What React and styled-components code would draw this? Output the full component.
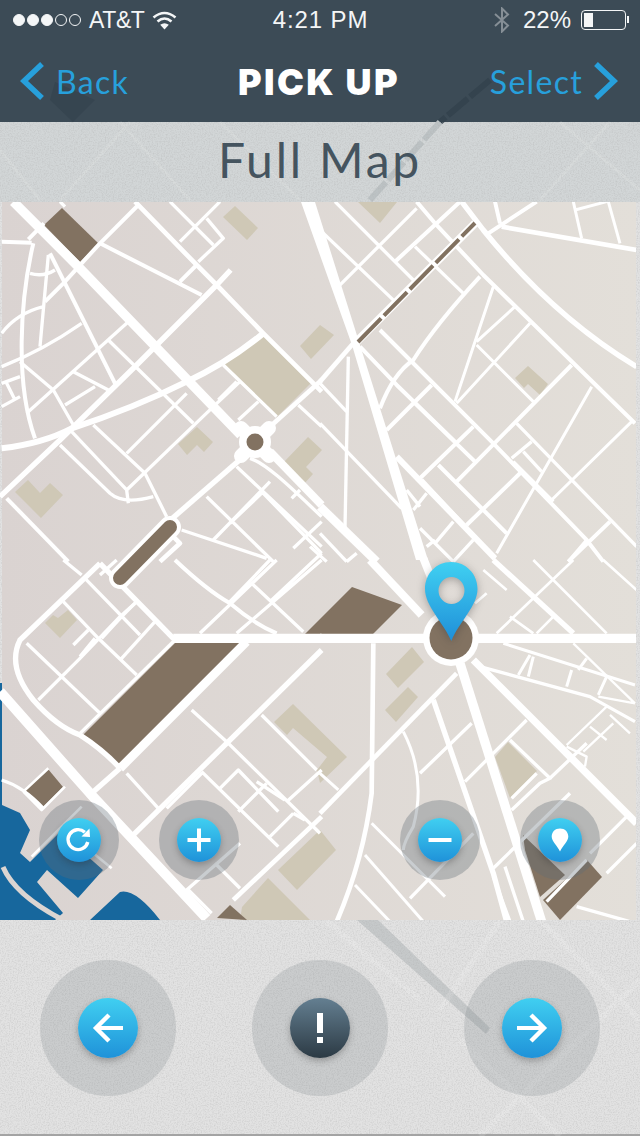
import React from 'react';
import styled, { createGlobalStyle } from 'styled-components';

const GlobalStyle = createGlobalStyle`
  html, body {
    margin: 0;
    padding: 0;
    background: #d6d8d8;
  }
  * { box-sizing: border-box; }
`;

const Page = styled.div`
  position: relative;
  width: 640px;
  height: 1136px;
  overflow: hidden;
  display: flex;
  flex-direction: column;
  font-family: "Liberation Sans", Arial, sans-serif;
  background: #e2e2e2;
`;
const Backdrop = styled.svg`
  position: absolute;
  inset: 0;
  z-index: 1;
  pointer-events: none;
`;
const Header = styled.header`
  height: 122px;
  background: #3c4b56;
  display: flex;
  flex-direction: column;
`;
const StatusBar = styled.div`
  position: relative;
  z-index: 2;
  height: 40px;
  padding: 0 12px 0 13px;
  display: grid;
  grid-template-columns: 1fr auto 1fr;
  align-items: center;
  color: #f4f6f7;
`;
const StatusGroup = styled.div`
  display: flex;
  align-items: center;
  gap: ${p => p.$gap || 8}px;
  justify-content: ${p => (p.$end ? 'flex-end' : 'flex-start')};
`;
const Dots = styled.div`
  display: flex;
  gap: 2px;
`;
const Dot = styled.span`
  width: 12px;
  height: 12px;
  border-radius: 50%;
  border: 1px solid #f4f6f7;
  background: ${p => (p.$on ? '#f4f6f7' : 'transparent')};
`;
const StatusText = styled.span`
  font-size: ${p => p.$size || 24}px;
  letter-spacing: ${p => p.$track || 0}px;
  line-height: 1;
`;
const Battery = styled.div`
  position: relative;
  width: 45px;
  height: 20px;
  border: 1.5px solid #f4f6f7;
  border-radius: 4px;
  padding: 2px;
  margin-right: 2px;
  &::before {
    content: '';
    display: block;
    width: 9px;
    height: 100%;
    background: #f4f6f7;
  }
  &::after {
    content: '';
    position: absolute;
    right: -4px;
    top: 5px;
    width: 2px;
    height: 7px;
    background: #f4f6f7;
  }
`;
const NavBar = styled.nav`
  position: relative;
  z-index: 2;
  flex: 1;
  padding: 0 22px 0 20px;
  display: grid;
  grid-template-columns: 1fr auto 1fr;
  align-items: center;
`;
const NavLink = styled.a`
  display: flex;
  align-items: center;
  gap: ${p => p.$gap}px;
  justify-content: ${p => (p.$end ? 'flex-end' : 'flex-start')};
  color: #27a0dc;
  font-family: "Lato", sans-serif;
  font-weight: 400;
  font-size: 32px;
  letter-spacing: 1.3px;
`;
const NavTitle = styled.h1`
  margin: 2px 0 0;
  color: #fff;
  font-family: "Inter", "Lato", sans-serif;
  font-weight: 900;
  font-size: 36px;
  letter-spacing: 2.4px;
  line-height: 1;
`;
const TitleBand = styled.div`
  position: relative;
  height: 80px;
  padding-bottom: 4px;
  background: #d2d6d7;
  display: flex;
  align-items: center;
  justify-content: center;
`;
const Title = styled.h2`
  position: relative;
  z-index: 2;
  margin: 0;
  color: #45545f;
  font-family: "Lato", sans-serif;
  font-weight: 400;
  font-size: 48px;
  letter-spacing: 2.8px;
  line-height: 1;
`;
const MapArea = styled.section`
  position: relative;
  z-index: 2;
  width: 636px;
  height: 718px;
  overflow: hidden;
`;
const MapDrawing = styled.svg`
  display: block;
`;
const Pin = styled.svg`
  position: absolute;
  left: 421px;
  top: 358px;
  filter: drop-shadow(0 2px 4px rgba(50, 50, 50, 0.35));
`;
const MapControls = styled.div`
  position: absolute;
  left: 39px;
  right: 36px;
  bottom: 40px;
  display: flex;
  justify-content: space-between;
`;
const ControlGroup = styled.div`
  display: flex;
  gap: 40px;
`;
const Halo = styled.div`
  width: ${p => p.$size}px;
  height: ${p => p.$size}px;
  border-radius: 50%;
  background: ${p => p.$tint || 'rgba(96, 108, 116, 0.34)'};
  display: flex;
  align-items: center;
  justify-content: center;
`;
const RoundButton = styled.button`
  width: ${p => p.$size}px;
  height: ${p => p.$size}px;
  padding: 0;
  border: none;
  border-radius: 50%;
  display: flex;
  align-items: center;
  justify-content: center;
  background: ${p =>
    p.$dark
      ? 'linear-gradient(#647f91, #2c3a44)'
      : 'linear-gradient(#40cff1, #1f92d9)'};
  box-shadow: 0 3px 6px rgba(40, 40, 40, 0.3);
`;
const BottomBar = styled.footer`
  position: relative;
  flex: 1;
  background: #e2e2e2;
  border-bottom: 2px solid #a3a3a3;
  padding: 40px 40px 0;
  display: flex;
  justify-content: space-between;
  align-items: flex-start;
`;
const BottomSlot = styled.div`
  position: relative;
  z-index: 2;
`;

const Chevron = ({ flip }) => (
  <svg width="25" height="38" viewBox="0 0 25 38">
    <polyline
      points={flip ? '3,2 21,19 3,36' : '22,2 4,19 22,36'}
      fill="none"
      stroke="#27a0dc"
      strokeWidth="5.5"
    />
  </svg>
);

const Wifi = () => (
  <svg width="25" height="19" viewBox="0 0 25 19" fill="none" stroke="#f4f6f7" strokeWidth="2.6">
    <path d="M1.5 6.5 Q12.5 -2.5 23.5 6.5" />
    <path d="M5.5 10.5 Q12.5 4.5 19.5 10.5" />
    <path d="M12.5 18.5 L8.2 13.8 Q12.5 10.6 16.8 13.8 Z" fill="#f4f6f7" stroke="none" />
  </svg>
);

const Bluetooth = () => (
  <svg width="20" height="26" viewBox="0 0 20 26" fill="none" stroke="#868f96" strokeWidth="2">
    <path d="M2 7 L15 18.5 L9 24.5 L9 1.5 L15 7.5 L2 19" />
  </svg>
);

const RefreshIcon = () => (
  <svg width="30" height="30" viewBox="0 0 30 30" fill="none">
    <path d="M23.8 17 A10 10 0 1 1 20.8 7.2" stroke="#fff" strokeWidth="3.4" />
    <path d="M17.5 11.5 L26 12 L25.5 3.5 Z" fill="#fff" />
  </svg>
);
const PlusIcon = () => (
  <svg width="24" height="24" viewBox="0 0 24 24" fill="#fff">
    <rect x="0.5" y="10" width="23" height="4" />
    <rect x="10" y="0.5" width="4" height="23" />
  </svg>
);
const MinusIcon = () => (
  <svg width="24" height="6" viewBox="0 0 24 6" fill="#fff">
    <rect x="0.5" y="1" width="23" height="4" />
  </svg>
);
const DropIcon = () => (
  <svg width="18" height="24" viewBox="0 0 18 24" fill="#fff">
    <path d="M9 0.5 C14 0.5 17.3 4 17.3 8.6 C17.3 13.5 12 17.5 9 23.5 C6 17.5 0.7 13.5 0.7 8.6 C0.7 4 4 0.5 9 0.5 Z" />
  </svg>
);
const ArrowIcon = ({ flip }) => (
  <svg width="32" height="32" viewBox="0 0 32 32" fill="none" stroke="#fff" strokeWidth="4.4"
    transform={flip ? 'scale(-1,1)' : undefined}>
    <path d="M1 16 H28" strokeWidth="4" />
    <polyline points="15,3 28,16 15,29" />
  </svg>
);
const BangIcon = () => (
  <svg width="8" height="30" viewBox="0 0 8 30" fill="#fff">
    <rect x="1" y="0" width="6" height="20" />
    <rect x="1" y="24" width="6" height="6" />
  </svg>
);

// streets are written in the coordinates of four 3x crops, one list per quadrant
const QUADS = [
  { at: [0, 200], roads: [
    [28, 'M40,5 L240,205 L722,705'],
    [18, 'M5,745 Q130,730 215,685 Q400,625 560,545 Q680,490 790,400'],
    [16, 'M0,890 L180,720 L410,495 L650,255 L692,210'],
    [14, 'M405,5 L590,195 L650,255 L790,400 L935,545 L965,575'],
    [14, 'M810,680 L965,540'],
    [24, 'M810,755 L965,915'],
    [16, 'M500,970 L730,770'],
    [12, 'M5,125 L95,128 M100,130 C60,300 45,550 105,715 M132,70 L85,118 M150,160 L345,550'],
    [10, 'M90,220 Q130,232 165,210 M5,400 Q50,340 130,320 M145,165 L120,440 M5,500 Q130,450 245,370'],
    [10, 'M60,485 L160,570 L220,675 M80,640 L385,365 M220,515 L325,570 M195,615 L285,560'],
    [10, 'M5,620 L60,590 M5,550 L60,530 M20,550 L45,600'],
    [12, 'M135,305 L190,250 L300,130 L415,15 M300,130 L605,285 M540,245 L590,195'],
    [10, 'M510,5 L640,135 M620,55 L670,115 L595,185 M540,125 L660,5 M180,5 L195,20'],
    [10, 'M325,420 L580,670 M280,675 L435,820 M215,695 L380,870 M180,735 L330,880 Q370,915 460,890'],
    [10, 'M380,760 L560,580 M380,870 L640,620 L720,545 M435,820 L500,950 M380,870 L385,910'],
    [10, 'M670,495 L830,650 M655,600 L710,545 M715,660 L775,605 M895,615 L965,680'],
    [10, 'M750,775 C800,790 880,870 965,950 M710,800 L965,1040 M620,890 L820,1085 M640,1020 L810,845'],
    [10, 'M545,990 L800,1075 M875,895 L900,870 M880,1045 L965,965 M790,880 L965,1060 M690,970 L790,875'],
    [12, 'M20,895 L205,1085'],
    [14, 'M480,1085 L540,1030 L520,1010'],
  ] },
  { at: [320, 200], roads: [
    [10, 'M45,5 L175,135 L280,240 M290,25 L55,260 M5,95 L225,305 M285,140 L430,280'],
    [12, 'M225,185 L420,5 M290,5 L345,70 L490,225 L945,670'],
    [16, 'M425,5 L490,90 Q700,350 950,500'],
    [12, 'M505,100 L650,5 M525,5 L540,70'],
    [14, 'M545,80 L950,150'],
    [9, 'M760,5 L785,115 M765,30 L860,5 M865,5 L900,130'],
    [24, 'M110,425 L465,70'],
    [12, 'M180,625 Q220,520 280,480 Q350,370 480,230'],
    [9, 'M520,260 L405,605 M470,425 L585,320 M470,435 L640,605 M410,610 L630,370'],
    [12, 'M180,390 L270,480 L520,730 L800,1020 L850,1085'],
    [12, 'M200,690 L335,555 M285,610 L465,785 M120,440 L230,555 L405,725 M300,835 L460,680 M410,845 L755,495'],
    [10, 'M590,670 L950,1040 M575,775 L635,725 M610,755 L665,815 M580,785 L700,905'],
    [9, 'M815,560 L530,1060 M695,900 L935,665'],
    [12, 'M305,840 L525,1075 M355,795 L560,1000 M440,975 L600,820 M745,1085 L870,965'],
    [10, 'M85,470 L75,985'],
    [10, 'M0,550 L80,635 M0,670 L245,925 M345,1030 L400,965 M280,930 L320,880 M260,870 L300,920'],
    [10, 'M300,985 L400,1085 M320,1040 L345,1020 M400,1085 L460,1020 M800,1020 L745,1085'],
    [18, 'M230,770 L525,1075'],
    [14, 'M0,545 L100,430'],
    [26, 'M0,920 L170,1085'],
    [10, 'M0,1000 L80,1085 M20,1085 L-30,1040 M110,1060 L80,1085'],
  ] },
  { at: [0, 560], roads: [
    [10, 'M190,0 L245,45 M350,0 L300,45'],
    [16, 'M300,10 L60,240 Q20,320 100,420 Q170,500 240,525 Q310,570 360,625'],
    [16, 'M300,10 L520,235 L530,235'],
    [10, 'M255,55 L420,225 M190,125 L295,235 L410,345 M410,125 L365,170 L305,235 M465,185 L365,295'],
    [10, 'M265,210 L220,255 M285,235 L240,290 M80,250 L300,460 M115,420 L240,295 L360,170 L410,125'],
    [10, 'M240,520 L525,240'],
    [26, 'M360,625 L740,245'],
    [10, 'M575,450 L680,545 L960,820 M785,465 L950,630'],
    [16, 'M400,825 L965,270'],
    [16, 'M275,700 L360,625'],
    [10, 'M380,640 L475,745 M500,745 L605,640 M605,635 L835,860 M660,685 L715,630 L835,755'],
    [10, 'M770,665 L855,720 M715,755 L800,670 M560,990 L720,850 M560,985 L635,1060'],
    [10, 'M810,830 L880,760 M720,985 L645,910 M860,725 L965,630 M880,760 L915,780'],
    [14, 'M700,1020 L965,770'],
    [30, 'M0,395 L270,700 L620,1075'],
    [12, 'M525,0 Q620,90 690,130 Q760,190 830,220'],
    [10, 'M600,220 L830,0 M710,220 L965,0 M690,125 L810,0 M755,70 L910,215 M810,125 L965,-20'],
    [8, 'M70,695 L125,750 L195,680 M145,625 L70,695'],
    [10, 'M5,660 Q70,680 130,745'],
    [8, 'M95,890 L245,740 M280,880 L335,925'],
    [28, 'M520,235 L965,235'],
  ] },
  { at: [320, 560], roads: [
    [28, 'M0,235 L950,235'],
    [24, 'M310,-5 L340,70'],
    [24, 'M150,0 L305,165'],
    [28, 'M420,310 L665,1085'],
    [22, 'M460,300 L950,790'],
    [14, 'M410,340 L0,760'],
    [16, 'M340,420 L520,940 L560,1085'],
    [9, 'M250,515 Q320,650 280,800 Q250,850 250,870'],
    [14, 'M160,250 L155,700 Q130,900 50,1085'],
    [16, 'M520,0 L760,220'],
    [8, 'M640,0 L860,220 M530,220 L760,0 M490,30 L560,90 M650,220 L700,170 M570,170 L640,220 M850,0 L950,90 M500,100 L465,130'],
    [9, 'M550,250 L945,375 M595,345 L630,285 M625,350 L640,290 M740,380 L755,330 M835,405 L860,350 M775,330 L800,295'],
    [10, 'M480,320 L810,410 L945,485'],
    [7, 'M760,250 L945,430 M835,410 L945,430 M740,555 L860,440 M790,575 L880,490 M740,560 L800,590 L795,620 M870,465 L930,520 M810,500 L860,540'],
    [9, 'M0,640 L55,690 M155,790 L375,1010 M135,885 L310,1085 M105,975 L210,1085'],
    [10, 'M270,1015 L460,820 M300,640 L455,490 M435,665 L620,480 M575,750 L660,670 L690,655 L570,540 M575,715 L650,640'],
    [10, 'M520,925 L750,700 M690,655 L800,550 M680,1025 L800,900 M770,1040 L930,1085'],
    [10, 'M860,940 L950,850 M810,880 L920,770 M555,920 L610,1085 M520,950 L570,1085'],
  ] },
];

const TAN = [
  '235,206 258,228 247,240 223,217',
  '263,335 312,382 277,417 224,364',
  '300,346 320,325 334,335 311,359',
  '197,427 213,442 204,452 197,445 187,455 178,444',
  '308,437 322,450 306,467 313,474 303,485 283,463',
  '28,480 40,493 50,483 63,495 41,518 15,492',
  '358,202 397,202 380,223',
  '528,366 548,384 540,395 528,384 524,388 515,378',
  '45,623 53,615 58,618 68,610 77,620 60,638',
  '412,647 424,662 398,688 386,674',
  '408,687 418,697 396,722 385,710',
  '293,704 347,757 320,783 317,770 327,757 293,728 287,735 274,722',
  '278,870 320,830 336,850 297,890',
  '268,878 310,920 240,920 242,907',
  '508,742 537,771 510,798 495,757',
];
const BROWN = [
  '175,643 242,643 120,767 83,735',
  '305,634 373,634 402,605 352,587',
  '62,208 98,243 80,262 44,225',
  '48,769 63,787 42,808 25,790',
  '523,835 565,875 540,897 525,850',
  '587,860 602,877 560,920 543,900',
  '217,918 230,905 247,920',
];

const MapArt = () => (
  <MapDrawing width="636" height="718" viewBox="0 202 636 718">
    <defs>
      <linearGradient id="land" x1="0" y1="0" x2="1" y2="0">
        <stop offset="0" stopColor="#dad3d1" />
        <stop offset="1" stopColor="#e3dfd9" />
      </linearGradient>
    </defs>
    <rect x="2" y="202" width="634" height="718" fill="url(#land)" />
    <path
      d="M0,683 L2,683 L2,805 L20,813 L30,830 L20,853 L30,862 L60,832 L103,870 L78,898 L47,870 L37,882 L63,913 L55,920 L0,920 Z M90,920 L120,892 Q135,888 160,920 Z"
      fill="#17679d"
    />
    <path d="M3,867 Q15,895 63,920" fill="none" stroke="#dbd5d2" strokeWidth="5" />
    {TAN.map(points => <polygon key={points} points={points} fill="#cfc8b6" />)}
    {BROWN.map(points => <polygon key={points} points={points} fill="#827261" />)}
    {QUADS.map(q => (
      <g key={q.at.join()} transform={`translate(${q.at[0]},${q.at[1]}) scale(0.3333)`}
        fill="none" stroke="#fff" strokeLinejoin="round">
        {q.roads.map(([w, d]) => <path key={d} d={d} strokeWidth={w} />)}
      </g>
    ))}
    <polygon points="301,202 315,202 360,345 428,560 416,560 352,345" fill="#fff" />
    {/* dashed tram line and the two squares */}
    <path d="M358,342 L475,223" stroke="#827261" strokeWidth="4" strokeDasharray="33 4" fill="none" />
    <path d="M120,578 L170,527" stroke="#fff" strokeWidth="22" strokeLinecap="round" fill="none" />
    <path d="M120,578 L170,527" stroke="#827261" strokeWidth="14" strokeLinecap="round" fill="none" />
    <path d="M241,428 L269,456 M269,428 L241,456" stroke="#fff" strokeWidth="14" strokeLinecap="round" fill="none" />
    <circle cx="255" cy="442" r="16" fill="#fff" />
    <circle cx="255" cy="442" r="8.5" fill="#827261" />
    <circle cx="451" cy="638" r="28" fill="#fff" />
    <circle cx="451" cy="638" r="21.5" fill="#827261" />
  </MapDrawing>
);

const MapPin = () => (
  <Pin width="60" height="84" viewBox="0 0 60 84">
    <defs>
      <linearGradient id="pin" x1="0" y1="0" x2="0" y2="1">
        <stop offset="0" stopColor="#40d0f2" />
        <stop offset="1" stopColor="#1f8fd8" />
      </linearGradient>
    </defs>
    <path
      fillRule="evenodd"
      fill="url(#pin)"
      d="M30 2 C45 2 56.5 14 56.5 29 C56.5 46 38 62 30.3 81 C22 62 4 46 4 29 C4 14 15 2 30 2 Z M30.5 17 A13 13.5 0 1 0 30.5 44 A13 13.5 0 1 0 30.5 17 Z"
    />
  </Pin>
);

const BackdropArt = () => (
  <Backdrop width="640" height="1136" viewBox="0 0 640 1136">
    <defs>
      <filter id="grain" x="0" y="0" width="100%" height="100%">
        <feTurbulence type="fractalNoise" baseFrequency="0.75" numOctaves="3" seed="4" />
        <feColorMatrix type="matrix" values="0 0 0 0 0.4 0 0 0 0 0.4 0 0 0 0 0.4 0 0 0 0.7 -0.28" />
      </filter>
    </defs>
    <polygon points="55,82 95,100 73,122 50,100" fill="#364550" />
    <path d="M490,80 L440,122" stroke="#34434e" strokeWidth="6" strokeDasharray="26 3" fill="none" />
    <path d="M440,122 L370,200" stroke="#bcc2c4" strokeWidth="6" strokeDasharray="24 3" fill="none" />
    <path d="M0,150 L40,200 M120,122 L190,200 M60,200 L130,122 M560,122 L640,190 M610,122 L540,200 M220,122 L300,200"
      stroke="#fff" strokeOpacity="0.12" strokeWidth="3" fill="none" />
    <polygon points="357,920 378,920 490,1028 486,1034" fill="#c6c9ca" />
    <path d="M325,920 L420,1000 M440,1010 L500,920 M480,1136 L640,980 M540,920 L640,1020 M560,1136 L460,1040"
      stroke="#fff" strokeOpacity="0.14" strokeWidth="6" fill="none" />
    <rect x="0" y="122" width="640" height="1014" filter="url(#grain)" />
  </Backdrop>
);

const BOTTOM_TINT = 'rgba(120,126,130,0.22)';

export default function App() {
  return (
    <Page>
      <GlobalStyle />
      <BackdropArt />
      <Header>
        <StatusBar>
          <StatusGroup>
            <Dots>
              <Dot $on /><Dot $on /><Dot $on /><Dot /><Dot />
            </Dots>
            <StatusText $size={23} $track={-0.4}>AT&amp;T</StatusText>
            <Wifi />
          </StatusGroup>
          <StatusText $size={24} $track={0.9}>4:21 PM</StatusText>
          <StatusGroup $end $gap={10}>
            <Bluetooth />
            <StatusText>22%</StatusText>
            <Battery />
          </StatusGroup>
        </StatusBar>
        <NavBar>
          <NavLink $gap={11}><Chevron />Back</NavLink>
          <NavTitle>PICK UP</NavTitle>
          <NavLink $end $gap={10}>Select<Chevron flip /></NavLink>
        </NavBar>
      </Header>
      <TitleBand>
        <Title>Full Map</Title>
      </TitleBand>
      <MapArea>
        <MapArt />
        <MapPin />
        <MapControls>
          <ControlGroup>
            <Halo $size={80}><RoundButton $size={44}><RefreshIcon /></RoundButton></Halo>
            <Halo $size={80}><RoundButton $size={44}><PlusIcon /></RoundButton></Halo>
          </ControlGroup>
          <ControlGroup>
            <Halo $size={80}><RoundButton $size={44}><MinusIcon /></RoundButton></Halo>
            <Halo $size={80}><RoundButton $size={44}><DropIcon /></RoundButton></Halo>
          </ControlGroup>
        </MapControls>
      </MapArea>
      <BottomBar>
        <BottomSlot>
          <Halo $size={136} $tint={BOTTOM_TINT}>
            <RoundButton $size={60}><ArrowIcon flip /></RoundButton>
          </Halo>
        </BottomSlot>
        <BottomSlot>
          <Halo $size={136} $tint={BOTTOM_TINT}>
            <RoundButton $size={60} $dark><BangIcon /></RoundButton>
          </Halo>
        </BottomSlot>
        <BottomSlot>
          <Halo $size={136} $tint={BOTTOM_TINT}>
            <RoundButton $size={60}><ArrowIcon /></RoundButton>
          </Halo>
        </BottomSlot>
      </BottomBar>
    </Page>
  );
}
